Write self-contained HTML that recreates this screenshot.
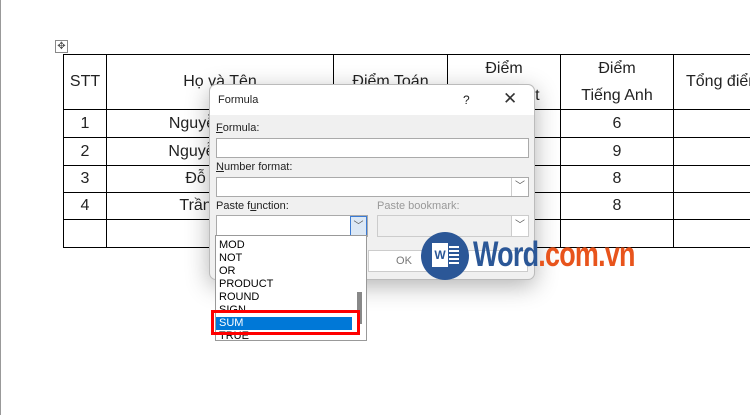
<!DOCTYPE html><html><head><style>
body{margin:0;width:750px;height:415px;background:#fff;position:relative;overflow:hidden;font-family:"Liberation Sans",sans-serif}
.a{position:absolute}
table{position:absolute;left:63px;top:54px;border-collapse:collapse;table-layout:fixed;width:720px;font-family:"Liberation Sans Narrow","Liberation Sans",sans-serif;font-size:16px;color:#222}
td{border:1px solid #000;text-align:center;padding:0;white-space:nowrap;overflow:hidden}
.dlg{left:209px;top:84px;width:324px;height:194px;background:#f0f0f0;border:1px solid #bbb;border-radius:7px;box-shadow:0 6px 24px rgba(0,0,0,.3);font-size:11px;color:#222;overflow:visible}
.tb{position:absolute;left:0;top:0;width:324px;height:30px;background:#fff;border-radius:7px 7px 0 0}
.in{position:absolute;background:#fff;border:1px solid #aaa}
.dd{position:absolute;width:16px;background:#fff;border-left:1px solid #ccc;font-size:10px;text-align:center;color:#555}
.lst div{height:13px;line-height:13px;padding-left:3px}
</style></head><body>
<div class="a" style="left:0;top:0;width:1px;height:415px;background:#999"></div>
<div class="a" style="left:55px;top:40px;width:11px;height:11px;border:1px solid #888;font-size:10px;line-height:11px;text-align:center;color:#555">✥</div>
<table>
<colgroup><col style="width:43px"><col style="width:227px"><col style="width:114px"><col style="width:113px"><col style="width:113px"><col style="width:110px"></colgroup>
<tr style="height:54px"><td>STT</td><td>Họ và Tên</td><td>Điểm Toán</td><td style="line-height:27px">Điểm<br>Tiếng Việt</td><td style="line-height:27px">Điểm<br>Tiếng Anh</td><td style="text-align:left;padding-left:12px">Tổng điểm</td></tr>
<tr style="height:28px"><td>1</td><td>Nguyễn Văn A</td><td></td><td></td><td>6</td><td></td></tr>
<tr style="height:28px"><td>2</td><td>Nguyễn Văn B</td><td></td><td></td><td>9</td><td></td></tr>
<tr style="height:27px"><td>3</td><td>Đỗ Văn C</td><td></td><td></td><td>8</td><td></td></tr>
<tr style="height:27px"><td>4</td><td>Trần Văn D</td><td></td><td></td><td>8</td><td></td></tr>
<tr style="height:28px"><td></td><td></td><td></td><td></td><td></td><td></td></tr>
</table>
<div class="a dlg">
<div class="tb"><span class="a" style="left:8px;top:9px">Formula</span><span class="a" style="left:253px;top:8px;font-size:12px">?</span><span class="a" style="left:293px;top:4px;font-size:17px;color:#333">✕</span></div>
<div class="a" style="left:6px;top:37px"><u>F</u>ormula:</div>
<div class="in" style="left:6px;top:53px;width:311px;height:18px"></div>
<div class="a" style="left:6px;top:76px"><u>N</u>umber format:</div>
<div class="in" style="left:6px;top:92px;width:311px;height:18px"><div class="dd" style="right:0;top:0;height:18px;line-height:18px">﹀</div></div>
<div class="a" style="left:6px;top:115px">Paste f<u>u</u>nction:</div>
<div class="a" style="left:167px;top:115px;color:#999">Paste bookmark:</div>
<div class="in" style="left:6px;top:130px;width:150px;height:20px"><div class="dd" style="right:0;top:0;height:20px;line-height:20px;background:#dce8f5;border:1px solid #3a7bd5;width:15px">﹀</div></div>
<div class="in" style="left:167px;top:130px;width:150px;height:20px;background:#f0f0f0;border-color:#ccc"><div class="dd" style="right:0;top:0;height:20px;line-height:20px">﹀</div></div>
<div class="in" style="left:158px;top:165px;width:70px;height:20px;border-color:#ccc;text-align:center;line-height:20px;color:#777">OK</div>
<div class="in" style="left:236px;top:165px;width:80px;height:20px;border-color:#ccc"></div>
</div>
<div class="a lst" style="left:215px;top:235px;width:150px;height:104px;background:#fff;border:1px solid #999;font-size:11px;overflow:hidden">
<div style="margin-top:3px">MOD</div><div>NOT</div><div>OR</div><div>PRODUCT</div><div>ROUND</div><div>SIGN</div><div style="background:#0078d7;color:#fff;margin-right:14px">SUM</div><div>TRUE</div>
<div class="a" style="right:4px;top:56px;width:2px;height:32px;background:#888"></div>
</div>
<div class="a" style="left:211px;top:310px;width:143px;height:19px;border:3px solid #f00"></div>
<div class="a" style="left:421px;top:232px;width:48px;height:48px;border-radius:50%;background:#2b5797"></div>
<div class="a" style="left:432px;top:243px;width:16px;height:24px;background:#fff;color:#2b5797;font-weight:bold;font-size:12px;line-height:24px;text-align:center">W</div>
<div class="a" style="left:449px;top:246px;width:10px;height:18px;background:repeating-linear-gradient(#fff 0 2px,#2b5797 2px 4px)"></div>
<div class="a" style="left:473px;top:235px;font-size:35px;font-weight:bold;letter-spacing:-1px;transform:scaleX(.77);transform-origin:left;white-space:nowrap"><span style="color:#2b5797">Word</span><span style="color:#e8541c">.com.vn</span></div>
</body></html>
